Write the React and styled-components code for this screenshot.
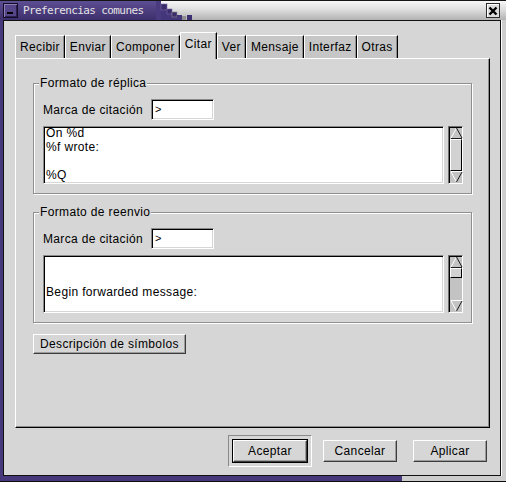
import React from "react";
import styled, { createGlobalStyle } from "styled-components";

const Global = createGlobalStyle`
  html, body { margin: 0; padding: 0; }
  body {
    font-family: "Liberation Sans", Arial, sans-serif;
    font-size: 12px;
    letter-spacing: 0.35px;
    color: #000;
    background: #d6d6d6;
  }
  * { box-sizing: border-box; }
`;

const PURPLE = "#46387a";
const GREY = "#d6d6d6";

const Window = styled.div`
  width: 506px;
  height: 482px;
  display: flex;
  flex-direction: column;
  background: linear-gradient(to right, ${PURPLE} 0, ${PURPLE} 402px, #cdcdcd 402px);
  border-bottom: 1px solid #0c0c0c;
`;

const TitleBar = styled.div`
  height: 20px;
  flex: none;
  display: flex;
  align-items: stretch;
  border-top: 1px solid #151515;
  background: linear-gradient(to bottom, #f7f7f7 0%, #dedede 45%, #b2b2b2 100%);
`;

const TitlePurple = styled.div`
  width: 156px;
  display: flex;
  align-items: center;
  gap: 5px;
  padding-left: 3px;
  background: linear-gradient(to bottom, #5d4d93, #3d2f6b);
`;

const MinButton = styled.div`
  width: 15px;
  height: 15px;
  border: 1px solid #120c24;
  box-shadow: inset 1px 1px 0 #8c7cb8, inset -1px -1px 0 #2c2050;
  background: #55468a;
  display: flex;
  align-items: flex-end;
  padding: 0 0 3px 3px;
  &::after {
    content: "";
    width: 6px;
    height: 2px;
    background: #000;
  }
`;

const TitleText = styled.span`
  font-family: "DejaVu Sans Mono", "Liberation Mono", monospace;
  font-size: 11px;
  letter-spacing: -0.6px;
  color: #e4e4e4;
  white-space: nowrap;
`;

const Stairs = styled.svg`
  flex: none;
  display: block;
`;

const TitleSpacer = styled.div`
  flex: 1;
`;

const CloseButton = styled.div`
  width: 14px;
  height: 15px;
  margin: 2px 6px 0 0;
  border: 1px solid #2a2a2a;
  box-shadow: inset 1px 1px 0 #fff;
  background: #dcdcdc;
  display: flex;
  align-items: center;
  justify-content: center;
`;

const Client = styled.div`
  flex: 1;
  margin: 0 5px 5px 3px;
  border: 1px solid #111;
  box-shadow: 1px 0 0 #fff;
  background: ${GREY};
  display: flex;
  flex-direction: column;
  padding: 11px 10px 0 11px;
`;

const Notebook = styled.div`
  flex: 1;
  display: flex;
  flex-direction: column;
`;

const TabBar = styled.div`
  height: 26px;
  display: flex;
  align-items: flex-end;
`;

const Tab = styled.div`
  position: relative;
  height: ${(p) => (p.$active ? "27px" : "23px")};
  margin-bottom: ${(p) => (p.$active ? "-1px" : "0")};
  z-index: ${(p) => (p.$active ? 1 : 0)};
  padding: 4px 4px 0;
  background: ${(p) => (p.$active ? GREY : "#c6c6c6")};
  border-top: 1px solid #fff;
  border-left: 1px solid #fff;
  border-right: 1px solid #000;
  box-shadow: inset -1px 0 0 #8e8e8e;
  line-height: 14px;
  white-space: nowrap;
`;

const Panel = styled.div`
  flex: 1;
  border: 1px solid;
  border-color: #fff #000 #000 #fff;
  box-shadow: inset -1px -1px 0 #8e8e8e;
  padding: 24px 17px 0 17px;
  display: flex;
  flex-direction: column;
  align-items: flex-start;
`;

const Frame = styled.div`
  position: relative;
  align-self: stretch;
  margin-top: ${(p) => p.$gap || 0}px;
  border: 1px solid #8f8f8f;
  box-shadow: inset 1px 1px 0 #fff, 1px 1px 0 #fff;
  padding: 15px 8px 9px 9px;
  display: flex;
  flex-direction: column;
  gap: 6px;
`;

const Legend = styled.span`
  position: absolute;
  top: -8px;
  left: 5px;
  padding: 0 1px;
  line-height: 14px;
  background: ${GREY};
`;

const FieldRow = styled.div`
  display: flex;
  align-items: center;
  gap: 8px;
`;

const Entry = styled.div`
  width: 63px;
  height: 21px;
  background: #fff;
  border: 1px solid;
  border-color: #8a8a8a #fff #fff #8a8a8a;
  box-shadow: inset 1px 1px 0 #000, inset -1px -1px 0 ${GREY};
  padding: 0 3px;
  font-size: 11px;
  line-height: 19px;
`;

const EditorRow = styled.div`
  display: flex;
  gap: 4px;
  height: 58px;
`;

const TextView = styled.div`
  flex: 1;
  background: #fff;
  border: 1px solid;
  border-color: #8a8a8a #fff #fff #8a8a8a;
  box-shadow: inset 1px 1px 0 #000, inset -1px -1px 0 ${GREY};
  padding: 1px 2px;
  overflow: hidden;
`;

const TextContent = styled.div`
  margin-top: ${(p) => p.$offset || 0}px;
  white-space: pre;
  line-height: 14px;
  font-size: 12px;
`;

const Scrollbar = styled.div`
  width: 15px;
  border: 1px solid;
  border-color: #6f6f6f #fff #fff #6f6f6f;
  box-shadow: inset 1px 1px 0 #000;
  background: #c3c3c3;
  display: flex;
  flex-direction: column;
  padding: 0 0 0 1px;
`;

const ArrowBox = styled.svg`
  display: block;
  flex: none;
`;

const Thumb = styled.div`
  flex: none;
  height: ${(p) => p.$size}px;
  border: 1px solid;
  border-color: #fff #000 #000 #fff;
  background: #d2d2d2;
`;

const Trough = styled.div`
  flex: 1;
`;

const Button = styled.button`
  font-family: "Liberation Sans", Arial, sans-serif;
  font-size: 12px;
  letter-spacing: 0.35px;
  color: #000;
  height: 20px;
  padding: 0 6px;
  margin: 0;
  background: ${GREY};
  border: 1px solid;
  border-color: #fff #3c3c3c #3c3c3c #fff;
  box-shadow: inset -1px -1px 0 #9c9c9c;
  white-space: nowrap;
  cursor: default;
`;

const SymbolsButton = styled(Button)`
  margin-top: 11px;
`;

const DialogButton = styled(Button)`
  width: 74px;
  height: 22px;
  padding: 0;
  box-shadow: inset -1px -1px 0 #9c9c9c
    ${(p) => (p.$default ? ", 0 0 0 1px #000" : "")};
`;

const ButtonRow = styled.div`
  flex: none;
  display: flex;
  justify-content: flex-end;
  align-items: center;
  gap: 16px;
  height: 32px;
  margin: 7px 3px 8px 0;
`;

const DefaultFrame = styled.div`
  border: 1px solid;
  border-color: #8a8a8a #fff #fff #8a8a8a;
  padding: 4px;
  margin-right: -5px;
`;

const UpArrow = () => (
  <ArrowBox width="13" height="12" viewBox="0 0 13 12">
    <line x1="1" y1="11" x2="6.5" y2="1" stroke="#fff" strokeWidth="1" />
    <line x1="6.5" y1="1" x2="12" y2="11" stroke="#1a1a1a" strokeWidth="1" />
    <line x1="1" y1="11.5" x2="12" y2="11.5" stroke="#1a1a1a" strokeWidth="1" />
  </ArrowBox>
);

const DownArrow = () => (
  <ArrowBox width="13" height="12" viewBox="0 0 13 12">
    <line x1="1" y1="0.5" x2="12" y2="0.5" stroke="#fff" strokeWidth="1" />
    <line x1="1" y1="1" x2="6.5" y2="11" stroke="#fff" strokeWidth="1" />
    <line x1="6.5" y1="11" x2="12" y2="1" stroke="#1a1a1a" strokeWidth="1" />
  </ArrowBox>
);

const VScroll = ({ thumb }) => (
  <Scrollbar>
    <UpArrow />
    <Thumb $size={thumb} />
    <Trough />
    <DownArrow />
  </Scrollbar>
);

const tabs = ["Recibir", "Enviar", "Componer", "Citar", "Ver", "Mensaje", "Interfaz", "Otras"];

const FormatFrame = ({ title, text, offset, thumb, gap }) => (
  <Frame $gap={gap}>
    <Legend>{title}</Legend>
    <FieldRow>
      <span>Marca de citación</span>
      <Entry>&gt;</Entry>
    </FieldRow>
    <EditorRow>
      <TextView>
        <TextContent $offset={offset}>{text}</TextContent>
      </TextView>
      <VScroll thumb={thumb} />
    </EditorRow>
  </Frame>
);

export default function App() {
  return (
    <>
      <Global />
      <Window>
        <TitleBar>
          <TitlePurple>
            <MinButton />
            <TitleText>Preferencias comunes</TitleText>
          </TitlePurple>
          <Stairs width="40" height="19" viewBox="0 0 40 19">
            <rect x="0" y="0" width="5" height="19" fill="#4a3b80" />
            <rect x="5" y="3" width="6" height="16" fill="#44367a" />
            <rect x="5" y="3" width="6" height="6" fill="#3a2d6a" stroke="#7a6aa8" strokeWidth="0.6" />
            <rect x="11" y="8" width="5" height="11" fill="#44367a" />
            <rect x="11" y="8" width="5" height="5" fill="#3a2d6a" stroke="#7a6aa8" strokeWidth="0.6" />
            <rect x="16" y="11" width="5" height="8" fill="#44367a" />
            <rect x="16" y="11" width="5" height="5" fill="#3a2d6a" stroke="#8a8a8a" strokeWidth="0.6" />
            <rect x="21" y="14" width="5" height="5" fill="#44367a" />
            <rect x="31" y="14" width="5" height="5" fill="#3d3070" />
            <rect x="26" y="15" width="4" height="4" fill="#8e8e8e" />
          </Stairs>
          <TitleSpacer />
          <CloseButton>
            <svg width="10" height="10" viewBox="0 0 10 10">
              <path d="M1.5 1.5 L8.5 8.5 M8.5 1.5 L1.5 8.5" stroke="#000" strokeWidth="2.4" />
            </svg>
          </CloseButton>
        </TitleBar>
        <Client>
          <Notebook>
            <TabBar>
              {tabs.map((t) => (
                <Tab key={t} $active={t === "Citar"}>
                  {t}
                </Tab>
              ))}
            </TabBar>
            <Panel>
              <FormatFrame
                title="Formato de réplica"
                text={"On %d\n%f wrote:\n\n%Q"}
                offset={-2}
                thumb={32}
              />
              <FormatFrame
                title="Formato de reenvio"
                text={"\n\nBegin forwarded message:"}
                offset={0}
                thumb={10}
                gap={18}
              />
              <SymbolsButton>Descripción de símbolos</SymbolsButton>
            </Panel>
          </Notebook>
          <ButtonRow>
            <DefaultFrame>
              <DialogButton $default>Aceptar</DialogButton>
            </DefaultFrame>
            <DialogButton>Cancelar</DialogButton>
            <DialogButton>Aplicar</DialogButton>
          </ButtonRow>
        </Client>
      </Window>
    </>
  );
}
